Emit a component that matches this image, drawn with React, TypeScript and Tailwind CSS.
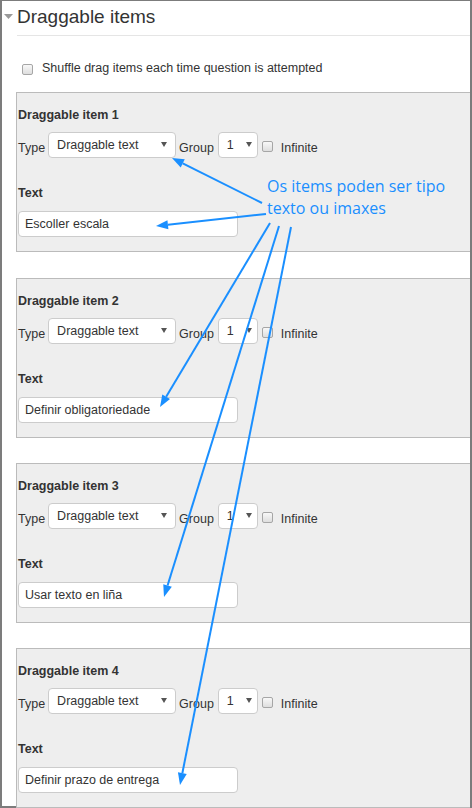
import React from 'react';

const BLUE = '#1a8fff';

const ITEMS = ['Escoller escala', 'Definir obligatoriedade', 'Usar texto en liña', 'Definir prazo de entrega'];

// annotation arrows, page coordinates: start -> tip
const ARROWS = [
  { x1: 262, y1: 203, x2: 172, y2: 158 },
  { x1: 266, y1: 214, x2: 156, y2: 226 },
  { x1: 270, y1: 223, x2: 160, y2: 407 },
  { x1: 279, y1: 226, x2: 164, y2: 597 },
  { x1: 291, y1: 227, x2: 180, y2: 785 },
];

function Checkbox() {
  return (
    <span className="inline-block w-[11px] h-[11px] shrink-0 rounded-[2px] border border-[#a6a6a6] bg-linear-to-b from-[#f8f8f8] to-[#dedede]" />
  );
}

function Select({ value, className }: { value: string; className: string }) {
  return (
    <div className={`h-[26px] flex items-center justify-between bg-white border border-[#cccccc] rounded-[4px] pl-[8px] ${className}`}>
      <span className="leading-[16px] -mt-[1px]">{value}</span>
      <svg width="6" height="5" viewBox="0 0 6 5" className="-mt-[1px]">
        <path d="M0 0h6L3 5z" fill="#555" />
      </svg>
    </div>
  );
}

function Arrow({ x1, y1, x2, y2 }: { x1: number; y1: number; x2: number; y2: number }) {
  const len = Math.hypot(x2 - x1, y2 - y1);
  const ux = (x2 - x1) / len;
  const uy = (y2 - y1) / len;
  const bx = x2 - ux * 12;
  const by = y2 - uy * 12;
  const px = -uy * 4.5;
  const py = ux * 4.5;
  return (
    <g>
      <line x1={x1} y1={y1} x2={bx} y2={by} stroke={BLUE} strokeWidth={2} />
      <polygon points={`${x2},${y2} ${bx + px},${by + py} ${bx - px},${by - py}`} fill={BLUE} />
    </g>
  );
}

function ItemPanel({ n, text, last }: { n: number; text: string; last: boolean }) {
  return (
    <div
      className={`h-[160px] shrink-0 bg-[#eeeeee] border-y border-l border-[#bbbbbb] pl-[1px] pt-[14px] ${
        n === 1 ? 'mb-[26px]' : last ? '' : 'mb-[25px]'
      }`}
    >
      <div className="font-bold leading-[16px]">Draggable item {n}</div>
      <div className="flex items-center mt-[9px]">
        <span className="leading-[16px] pt-[6px]">Type</span>
        <Select value="Draggable text" className="w-[128px] ml-[3px] pr-[8px]" />
        <span className="leading-[16px] pt-[6px] ml-[3px]">Group</span>
        <Select value="1" className="w-[40px] ml-[4px] pr-[5px]" />
        <span className="ml-[4px] mt-[3px] flex">
          <Checkbox />
        </span>
        <span className="leading-[16px] pt-[6px] ml-[8px]">Infinite</span>
      </div>
      <div className="font-bold leading-[16px] mt-[27px]">Text</div>
      <div className="mt-[10px] w-[220px] h-[26px] bg-white border border-[#cccccc] rounded-[4px] pl-[6px] flex items-center">
        <span className="leading-[16px]">{text}</span>
      </div>
    </div>
  );
}

export default function App() {
  return (
    <div className="relative w-[472px] h-[808px] overflow-hidden bg-white font-['Liberation_Sans',Arial,sans-serif] text-[12.5px] text-[#333333]">
      <div className="h-full flex flex-col border-t border-x-2 border-b-2 border-[#7c7c7c]">
        {/* Header */}
        <div className="flex pt-[4px] shrink-0">
          <div className="w-[15px] pl-[2px] pt-[9px]">
            <svg width="9" height="5" viewBox="0 0 9 5">
              <path d="M0 0h9L4.5 5z" fill="#9a9a9a" />
            </svg>
          </div>
          <div className="flex-1 border-b border-[#e5e5e5] pb-[7px]">
            <h2 className="text-[19px] leading-[23px] text-[#333333]">Draggable items</h2>
          </div>
        </div>

        {/* Shuffle */}
        <div className="flex items-center h-[20px] mt-[22px] ml-[20px] shrink-0">
          <span className="mt-[3px] flex">
            <Checkbox />
          </span>
          <span className="ml-[9px] leading-[16px]">Shuffle drag items each time question is attempted</span>
        </div>

        {/* Items */}
        <div className="flex flex-col ml-[14px] mt-[14px]">
          {ITEMS.map((t, i) => (
            <ItemPanel key={i} n={i + 1} text={t} last={i === ITEMS.length - 1} />
          ))}
        </div>
      </div>

      {/* Annotation overlay */}
      <svg className="absolute inset-0 pointer-events-none" width="472" height="808">
        {ARROWS.map((a, i) => (
          <Arrow key={i} {...a} />
        ))}
      </svg>
      <div
        className="absolute left-[267px] top-[175px] font-['Open_Sans',sans-serif] text-[16px] leading-[22px]"
        style={{ color: BLUE }}
      >
        <div>Os items poden ser tipo</div>
        <div>texto ou imaxes</div>
      </div>
    </div>
  );
}
